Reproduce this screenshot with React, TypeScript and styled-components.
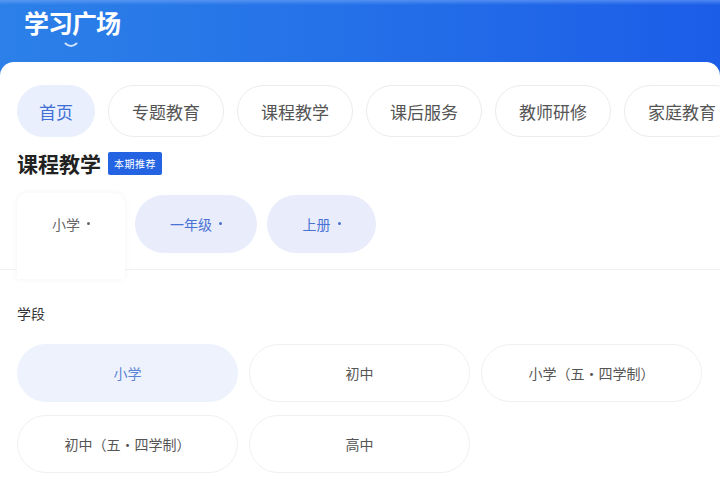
import React from "react";
import styled, { createGlobalStyle } from "styled-components";

const Global = createGlobalStyle`
  html, body { margin: 0; padding: 0; background: #ffffff; }
  body { font-family: "Noto Sans CJK SC", "Noto Sans", sans-serif; overflow: hidden; }
  * { box-sizing: border-box; }
`;

const Page = styled.div`
  width: 720px;
  height: 479px;
  overflow: hidden;
  background: #fff;
`;

const Header = styled.header`
  height: 78px;
  padding: 4px 0 0 24px;
  background:
    linear-gradient(180deg, rgba(120, 170, 250, 0.55) 0px, rgba(120, 170, 250, 0) 5px),
    linear-gradient(90deg, #2c80e8 0%, #2470e8 50%, #1c5de8 100%);
  display: flex;
  flex-direction: column;
  align-items: flex-start;
`;

const Title = styled.h1`
  margin: 0;
  color: #fff;
  font-size: 25px;
  line-height: 36px;
  font-weight: 700;
  letter-spacing: -1px;
`;

const Smile = styled.svg`
  margin: 2px 0 0 40px;
  display: block;
`;

const Card = styled.main`
  margin-top: -16px;
  background: #fff;
  border-radius: 14px 14px 0 0;
  padding-top: 23px;
  position: relative;
`;

const TabRow = styled.nav`
  display: flex;
  gap: 13px;
  padding-left: 17px;
  overflow: hidden;
  white-space: nowrap;
`;

const Tab = styled.div<{ $active?: boolean }>`
  flex-shrink: 0;
  height: 52px;
  padding: 0 ${(p) => (p.$active ? "21px" : "23px")};
  border-radius: 26px;
  display: flex;
  align-items: center;
  font-size: 17px;
  color: ${(p) => (p.$active ? "#3f6fd6" : "#555")};
  background: ${(p) => (p.$active ? "#e9effc" : "#fff")};
  border: 1px solid ${(p) => (p.$active ? "#e9effc" : "#ececec")};
`;

const SectionHead = styled.div`
  display: flex;
  align-items: center;
  gap: 7px;
  padding: 11px 0 0 17px;
`;

const SectionTitle = styled.h2`
  margin: 0;
  font-size: 21px;
  line-height: 30px;
  font-weight: 700;
  color: #222;
`;

const Badge = styled.span`
  background: #2464e2;
  color: #fff;
  font-size: 10px;
  line-height: 23px;
  height: 23px;
  padding: 0 6px;
  border-radius: 2px;
  letter-spacing: 0.5px;
`;

const FilterRow = styled.div`
  margin-top: 15px;
  display: flex;
  align-items: flex-start;
  gap: 10px;
  padding-left: 17px;
  border-bottom: 1px solid #f1f1f3;
  height: 77px;
`;

const DropTab = styled.div`
  width: 108px;
  height: 86px;
  background: #fff;
  border-radius: 10px 10px 0 0;
  box-shadow: 0 0 6px rgba(0, 0, 0, 0.05);
  padding-top: 21px;
  font-size: 14px;
  color: #666;
  position: relative;
  z-index: 1;
`;

const DropLabel = styled.div`
  height: 20px;
  display: flex;
  align-items: center;
  justify-content: center;
`;

const FilterPill = styled.div<{ $w: number }>`
  width: ${(p) => p.$w}px;
  height: 58px;
  margin-top: 2px;
  border-radius: 29px;
  background: #e8ecfb;
  color: #4a72d4;
  font-size: 14px;
  display: flex;
  align-items: center;
  justify-content: center;
`;

const Dot = styled.span`
  width: 3px;
  height: 3px;
  border-radius: 50%;
  background: currentColor;
  margin-left: 7px;
  margin-top: -2px;
`;

const Label = styled.div`
  margin: 33px 0 0 17px;
  font-size: 14px;
  line-height: 20px;
  color: #333;
`;

const Grid = styled.div`
  margin-top: 21px;
  padding: 0 17px;
  display: grid;
  grid-template-columns: repeat(3, 221px);
  column-gap: 11px;
  row-gap: 13px;
`;

const Option = styled.div<{ $active?: boolean }>`
  height: 58px;
  border-radius: 29px;
  display: flex;
  align-items: center;
  justify-content: center;
  font-size: 14px;
  color: ${(p) => (p.$active ? "#5a84d6" : "#555")};
  background: ${(p) => (p.$active ? "#edf2fc" : "#fff")};
  border: 1px solid ${(p) => (p.$active ? "#edf2fc" : "#f0f0f2")};
`;

const tabs = ["首页", "专题教育", "课程教学", "课后服务", "教师研修", "家庭教育"];
const options = ["小学", "初中", "小学（五·四学制）", "初中（五·四学制）", "高中"];

export default function App() {
  return (
    <Page>
      <Global />
      <Header>
        <Title>学习广场</Title>
        <Smile width="14" height="6" viewBox="0 0 14 6">
          <path d="M1.5 1.5 Q7 6.5 12.5 1.5" stroke="#cfe3ff" strokeWidth="2" fill="none" strokeLinecap="round" />
        </Smile>
      </Header>
      <Card>
        <TabRow>
          {tabs.map((t, i) => (
            <Tab key={t} $active={i === 0}>
              {t}
            </Tab>
          ))}
        </TabRow>
        <SectionHead>
          <SectionTitle>课程教学</SectionTitle>
          <Badge>本期推荐</Badge>
        </SectionHead>
        <FilterRow>
          <DropTab>
            <DropLabel>
              小学<Dot />
            </DropLabel>
          </DropTab>
          <FilterPill $w={122}>
            一年级<Dot />
          </FilterPill>
          <FilterPill $w={109}>
            上册<Dot />
          </FilterPill>
        </FilterRow>
        <Label>学段</Label>
        <Grid>
          {options.map((o, i) => (
            <Option key={o} $active={i === 0}>
              {o}
            </Option>
          ))}
        </Grid>
      </Card>
    </Page>
  );
}
